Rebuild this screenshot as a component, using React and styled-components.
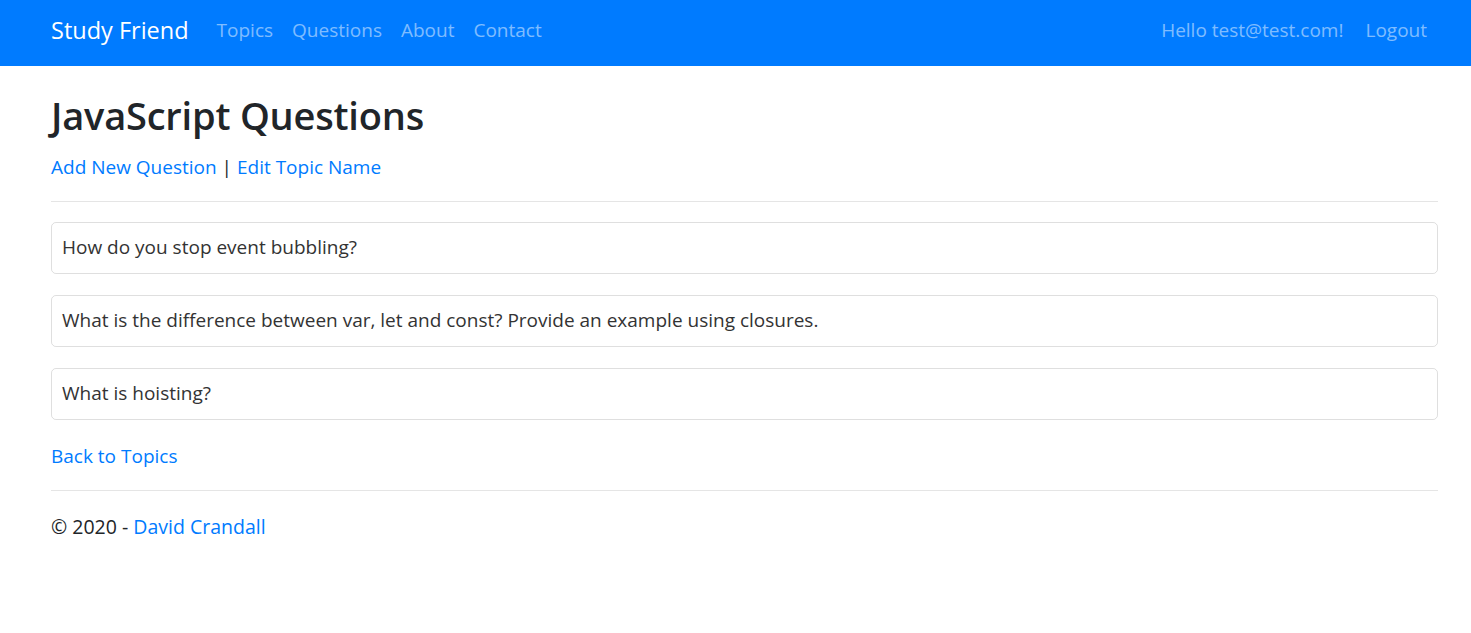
import React from "react";
import styled, { createGlobalStyle } from "styled-components";

const Global = createGlobalStyle`
  html, body { margin: 0; padding: 0; background: #fff; }
  body {
    font-family: "Open Sans", "Noto Sans", sans-serif;
    font-size: 19px;
    color: #212529;
    line-height: 1.5;
  }
  * { box-sizing: border-box; }
`;

const NavBar = styled.nav`
  height: 66px;
  background: #007bff;
  display: flex;
  align-items: center;
  padding: 0 44px 0 51px;
`;

const Brand = styled.a`
  color: #fff;
  font-size: 23.5px;
  text-decoration: none;
  margin-right: 28px;
  margin-top: -4px;
`;

const NavList = styled.div`
  display: flex;
  align-items: center;
  gap: ${(p) => p.$gap || 19}px;
  margin-left: ${(p) => (p.$right ? "auto" : "0")};
`;

const NavLink = styled.a`
  color: rgba(255, 255, 255, 0.5);
  font-size: 19px;
  text-decoration: none;
  margin-top: -5px;
`;

const Main = styled.main`
  padding: 27px 33px 0 51px;
`;

const Title = styled.h1`
  margin: 0;
  font-size: 38px;
  font-weight: 600;
  line-height: 1.2;
  letter-spacing: -0.2px;
`;

const LinkRow = styled.p`
  margin: 14px 0 0;
  line-height: 28px;
`;

const Link = styled.a`
  color: #007bff;
  text-decoration: none;
`;

const Rule = styled.hr`
  border: 0;
  border-top: 1px solid rgba(0, 0, 0, 0.1);
  margin: ${(p) => p.$m || "20px 0 20px"};
`;

const QuestionList = styled.div`
  display: flex;
  flex-direction: column;
  gap: 21px;
`;

const Question = styled.div`
  border: 1px solid rgba(0, 0, 0, 0.125);
  border-radius: 5px;
  padding: 0 10px;
  height: 52px;
  display: flex;
  align-items: center;
  color: #333;
  font-size: 19px;
`;

const BackRow = styled.p`
  margin: 22px 0 0;
  line-height: 28px;
`;

const Footer = styled.footer`
  line-height: 28px;
  margin-top: 22px;
  font-size: 19.5px;
`;

export default function App() {
  return (
    <>
      <Global />
      <NavBar>
        <Brand href="#">Study Friend</Brand>
        <NavList>
          <NavLink href="#">Topics</NavLink>
          <NavLink href="#">Questions</NavLink>
          <NavLink href="#">About</NavLink>
          <NavLink href="#">Contact</NavLink>
        </NavList>
        <NavList $right $gap={22}>
          <NavLink href="#">Hello test@test.com!</NavLink>
          <NavLink href="#">Logout</NavLink>
        </NavList>
      </NavBar>
      <Main>
        <Title>JavaScript Questions</Title>
        <LinkRow>
          <Link href="#">Add New Question</Link> | <Link href="#">Edit Topic Name</Link>
        </LinkRow>
        <Rule />
        <QuestionList>
          <Question>How do you stop event bubbling?</Question>
          <Question>What is the difference between var, let and const? Provide an example using closures.</Question>
          <Question>What is hoisting?</Question>
        </QuestionList>
        <BackRow>
          <Link href="#">Back to Topics</Link>
        </BackRow>
        <Rule $m="20px 0 22px" />
        <Footer>
          © 2020 - <Link href="#">David Crandall</Link>
        </Footer>
      </Main>
    </>
  );
}
